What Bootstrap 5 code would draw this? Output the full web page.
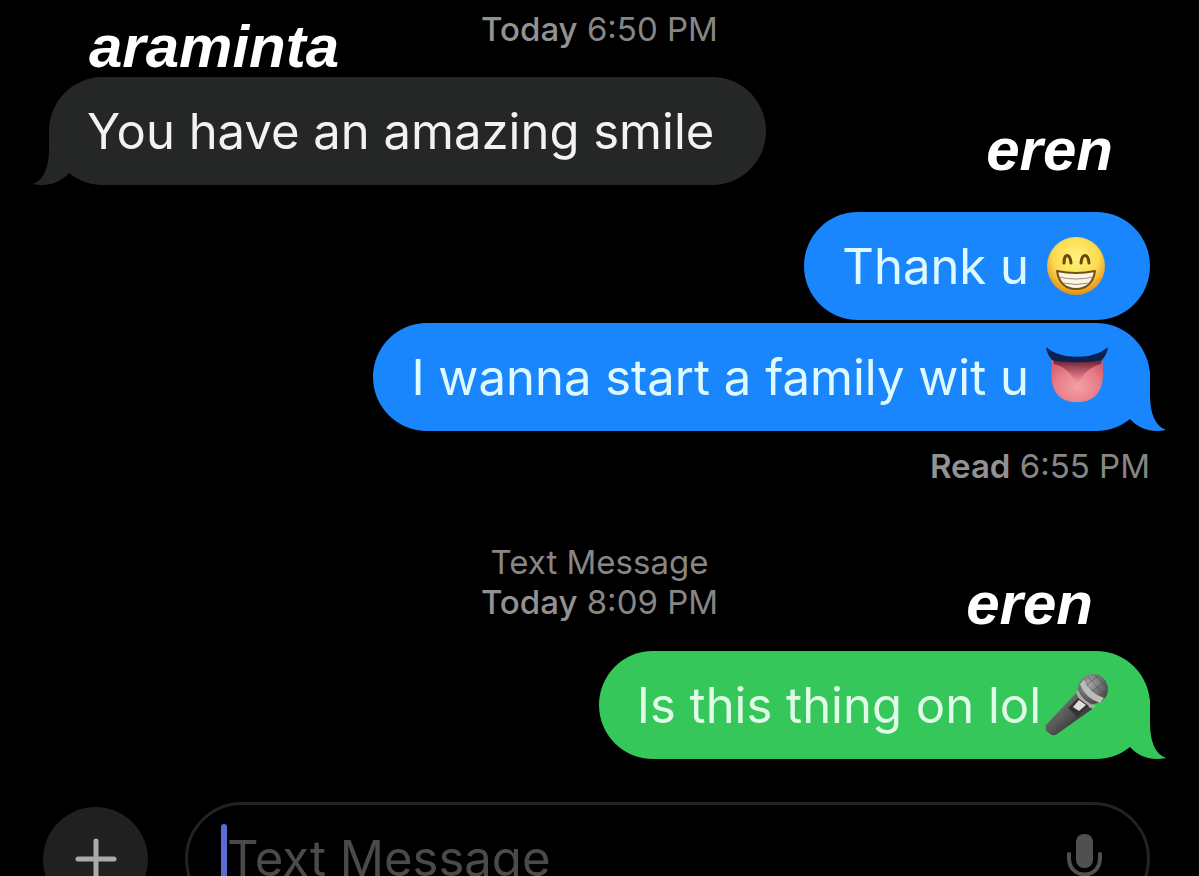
<!DOCTYPE html>
<html lang="en">
<head>
<meta charset="utf-8">
<meta name="viewport" content="width=device-width, initial-scale=1">
<title>Messages</title>
<link href="https://cdn.jsdelivr.net/npm/bootstrap@5.3.0/dist/css/bootstrap.min.css" rel="stylesheet">
<style>
body { background: #000; font-family: Inter, "Noto Sans", sans-serif; }
.thread { padding: 9px 49px 0; }
.stamp { font-size: 33px; line-height: 40px; color: #868686; }
.stamp strong { font-weight: 500; color: #929292; }
.receipt { padding-top: 15px; margin-bottom: 56px; }
.receipt strong { font-weight: 600; }
.sender { font: italic bold 60px/60px "Liberation Sans", Arial, sans-serif; color: #fff; }
.sender-in { margin: -32px 0 0 40px; }
.sender-out { margin: -65px 37px 32px 0; }
.sender-late { margin: -48px 57px 17px 0; }
.bubble { height: 108px; border-radius: 54px; padding: 2px 40px 0 38px; font-size: 49px; line-height: 60px; color: #f2f2f2; white-space: nowrap; }
.bubble-in { background: #252626; padding-right: 52px; }
.bubble-blue { background: #1a86fd; color: #dffaff; }
.bubble-green { background: #35c759; color: #e0fbe6; }
.bubble-next { margin-top: 3px; }
.emoji { width: 68px; height: 68px; margin: 0 -1px 0 14px; }
.emoji-tight { margin-left: 2px; }
.tail { width: 60px; height: 60px; bottom: 0; right: -16px; fill: currentColor; }
.tail-left { right: auto; left: -16px; transform: scaleX(-1); }
.tail-gray { color: #252626; }
.tail-blue { color: #1a86fd; }
.tail-green { color: #35c759; }
.composer { padding: 43px 49px 0 43px; }
.plus { width: 105px; height: 105px; background: #202020; border: 0; }
.entry { height: 114px; margin-left: 37px; border: 3px solid #222; border-radius: 57px; padding: 0 41px 0 33px; }
.caret { width: 6px; height: 70px; border-radius: 3px; background: #596cd6; }
.entry input { font-size: 49px; line-height: 60px; color: #ddd; }
.entry input::placeholder { color: #4a4a4a; opacity: 1; }
</style>
</head>
<body class="vh-100 overflow-hidden">
<main class="thread d-flex flex-column">
  <div class="stamp text-center"><strong>Today</strong> 6:50 PM</div>
  <div class="sender sender-in align-self-start">araminta</div>
  <div class="bubble bubble-in position-relative d-flex align-items-center align-self-start">
    <svg class="tail tail-left tail-gray position-absolute" viewBox="0 0 60 60"><path d="M44 0V24C44 42 49 55 60 59C46 62 33 58 24 48L4 6Z"/></svg>
    <span class="position-relative">You have an amazing smile</span>
  </div>
  <div class="sender sender-out align-self-end">eren</div>
  <div class="bubble bubble-blue d-flex align-items-center align-self-end">
    <span>Thank u</span>
    <svg class="emoji" viewBox="0 0 68 68" role="img" aria-label="Beaming face">
      <defs><radialGradient id="face" cx=".5" cy=".36" r=".64"><stop offset="0" stop-color="#fff27a"/><stop offset=".6" stop-color="#fbdc50"/><stop offset="1" stop-color="#e58d16"/></radialGradient></defs>
      <circle cx="33" cy="33" r="29" fill="url(#face)"/>
      <path d="M21 30C21 20 27 20 28 30M38 30C39 20 45 20 46 30" fill="none" stroke="#6b4808" stroke-width="3" stroke-linecap="round"/>
      <path d="M14 38Q33 42 52 38C50 51 42 56 33 56S16 51 14 38Z" fill="#f9f5e9" stroke="#74500f" stroke-width="2" stroke-linejoin="round"/>
      <path d="M16 44Q33 48 50 44M20 50Q33 53 46 50" fill="none" stroke="#a08b68" stroke-width="1"/>
    </svg>
  </div>
  <div class="bubble bubble-blue bubble-next position-relative d-flex align-items-center align-self-end">
    <svg class="tail tail-blue position-absolute" viewBox="0 0 60 60"><path d="M44 0V24C44 42 49 55 60 59C46 62 33 58 24 48L4 6Z"/></svg>
    <span>I wanna start a family wit u</span>
    <svg class="emoji position-relative" viewBox="0 0 68 68" role="img" aria-label="Tongue">
      <defs><radialGradient id="tongue" cx=".5" cy=".65" r=".65"><stop offset="0" stop-color="#f2a0a8"/><stop offset=".6" stop-color="#e98089"/><stop offset="1" stop-color="#d75e70"/></radialGradient>
      <linearGradient id="shade" x2="0" y2="1"><stop offset="0" stop-color="#561a2f"/><stop offset="1" stop-color="#c55265" stop-opacity="0"/></linearGradient></defs>
      <path d="M9 14Q34 20 59 14C61 28 61 42 54 50C46 61 22 61 14 50C7 42 8 28 9 14Z" fill="url(#tongue)"/>
      <path d="M10 15Q34 20 59 15L58 20Q44 23 34 40Q25 23 11 20Z" fill="url(#shade)"/>
      <path d="M3 3C17 16 51 16 65 3C64 9 62 13 59 16C46 19 22 19 9 16C6 13 4 9 3 3Z" fill="#0b2250"/>
    </svg>
  </div>
  <div class="stamp receipt text-end"><strong>Read</strong> 6:55 PM</div>
  <div class="stamp text-center">Text Message<br><strong>Today</strong> 8:09 PM</div>
  <div class="sender sender-late align-self-end">eren</div>
  <div class="bubble bubble-green position-relative d-flex align-items-center align-self-end">
    <svg class="tail tail-green position-absolute" viewBox="0 0 60 60"><path d="M44 0V24C44 42 49 55 60 59C46 62 33 58 24 48L4 6Z"/></svg>
    <span>Is this thing on lol</span>
    <svg class="emoji emoji-tight position-relative" viewBox="0 0 68 68" role="img" aria-label="Microphone">
      <defs><linearGradient id="body" x1=".2" y1=".2" x2=".8" y2=".8"><stop offset="0" stop-color="#777"/><stop offset=".5" stop-color="#555"/><stop offset="1" stop-color="#252525"/></linearGradient>
      <radialGradient id="grille" cx=".4" cy=".3" r=".7"><stop offset="0" stop-color="#a5a5a5"/><stop offset="1" stop-color="#484848"/></radialGradient></defs>
      <path d="M34 20L52 35L14 62Q10 65 6 61Q1 58 3 53Z" fill="url(#body)"/>
      <circle cx="50" cy="17" r="15" fill="url(#grille)"/>
      <path d="M45 5L63 24M52 3L64 16M43 24L63 9M39 17L55 4M49 30L64 18" stroke="#444" stroke-width="1" opacity=".5"/>
      <path d="M41 8Q45 20 61 26L57 31Q42 26 37 12Z" fill="#bcbcbc"/>
      <path d="M35 18Q40 30 53 34L50 37Q37 32 33 21Z" fill="#aaa"/>
      <path d="M25 36L35 26L46 34L34 45Z" fill="#333"/><path d="M30 35L36 28L43 33L36 39Z" fill="#ddd"/>
    </svg>
  </div>
</main>
<form class="composer d-flex align-items-center">
  <button type="button" class="plus rounded-circle flex-shrink-0 p-0 d-flex align-items-center justify-content-center" aria-label="Add attachment">
    <svg width="42" height="42" viewBox="0 0 42 42" fill="none" stroke="#aaa" stroke-width="5" stroke-linecap="round"><path d="M21 3V39M3 21H39"/></svg>
  </button>
  <div class="entry d-flex align-items-center flex-grow-1">
    <span class="caret flex-shrink-0"></span>
    <input id="message" class="flex-grow-1 bg-transparent border-0 p-0" type="text" placeholder="Text Message" aria-label="Text Message">
    <svg width="42" height="56" viewBox="0 0 42 56" aria-hidden="true"><rect x="12" y="3" width="17" height="34" rx="8" fill="#505050"/><path d="M5 23V27C5 49 36 49 36 27V23M20 44V53" fill="none" stroke="#505050" stroke-width="4" stroke-linecap="round"/></svg>
  </div>
</form>
<script src="https://cdn.jsdelivr.net/npm/bootstrap@5.3.0/dist/js/bootstrap.bundle.min.js"></script>
</body>
</html>
